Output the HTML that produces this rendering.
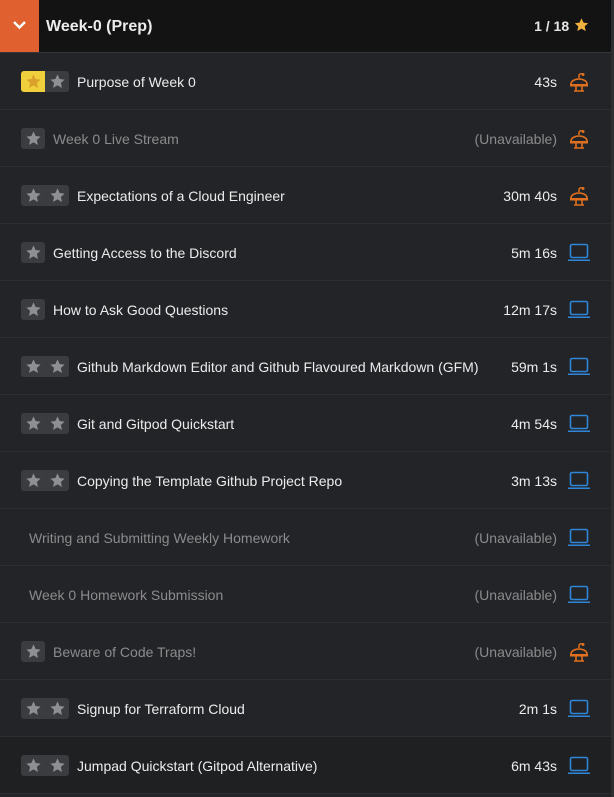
<!DOCTYPE html><html><head><style>
body{margin:0;width:614px;height:797px;background:#1b1b1d;font-family:"Liberation Sans",sans-serif;overflow:hidden}
.wrap{position:absolute;left:0;top:0;width:611px;height:797px;border-right:3px solid #2e2f31;background:#232427}
.hdr{height:52px;background:#131313;border-bottom:1px solid #35363a;position:relative}
.hdr .ob{position:absolute;left:0;top:0;width:39px;height:52px;background:#e0602f}
.hdr .t{position:absolute;left:46px;top:18px;color:#ececec;font-size:16px;font-weight:bold}
.hdr .c{position:absolute;right:21px;top:17px;color:#e6e6e6;font-size:14px;font-weight:bold}
.row{height:56px;border-bottom:1px solid #2d2e31;position:relative;display:flex;align-items:center;font-size:14px;color:#ececec;padding-top:1px;box-sizing:border-box;height:57px}
.row.u{color:#8b8b8d}
.row.last{background:#1f2022}
.stars{margin-left:21px;height:21px;border-radius:3px;background:#3b3c3f;display:flex;margin-right:8px}
.stars span{width:24px;height:21px;display:flex;align-items:center;justify-content:center}
.stars span.y{background:#f0cf3c;border-radius:3px 0 0 3px}
.nos{margin-left:29px}
.r{position:absolute;right:54px;top:21px}
.ic{position:absolute;right:20px;top:19px}
</style></head><body><div class="wrap">
<div class="hdr"><div class="ob"><svg width="39" height="52"><path d="M14 22l5.5 5.5L25 22" stroke="#fff" stroke-width="2.5" fill="none"/></svg></div><div class="t">Week-0 (Prep)</div><div class="c">1 / 18 <svg width="17" height="16" viewBox="0 0 24 24" style="vertical-align:-2px"><path d="M12 2l3 6.5 7 .8-5.2 4.8 1.5 7L12 17.5 5.7 21l1.5-7L2 9.3l7-.8z" fill="#f0b23c"/></svg></div></div>
<div id="rows"></div>
</div>
<script>
const S=(c)=>`<svg width="17" height="17" viewBox="0 0 24 24"><path d="M12 2l3 6.5 7 .8-5.2 4.8 1.5 7L12 17.5 5.7 21l1.5-7L2 9.3l7-.8z" fill="${c}"/></svg>`;
const L='<svg width="24" height="20" viewBox="0 0 24 20"><rect x="3.5" y="1.5" width="17" height="13" rx="1.5" fill="none" stroke="#2f86d8" stroke-width="1.6"/><path d="M1 16.5h22v1.5H1z" fill="#2f86d8"/></svg>';
const D='<svg width="24" height="22" viewBox="0 0 24 22"><path d="M12 6V3.5a2 2 0 0 1 3-1.5" stroke="#e0701f" stroke-width="1.5" fill="none"/><circle cx="16" cy="2.5" r="1.5" fill="#e0701f"/><path d="M4 12a8 5 0 0 1 16 0" fill="none" stroke="#e0701f" stroke-width="1.6"/><rect x="3" y="12" width="18" height="2.5" fill="#e0701f"/><path d="M9 14.5v4M15 14.5v4M7 19h10" stroke="#e0701f" stroke-width="1.6"/></svg>';
const rows=[
[2,'Purpose of Week 0','43s',D,0,1],
[1,'Week 0 Live Stream','(Unavailable)',D,1],
[2,'Expectations of a Cloud Engineer','30m 40s',D],
[1,'Getting Access to the Discord','5m 16s',L],
[1,'How to Ask Good Questions','12m 17s',L],
[2,'Github Markdown Editor and Github Flavoured Markdown (GFM)','59m 1s',L],
[2,'Git and Gitpod Quickstart','4m 54s',L],
[2,'Copying the Template Github Project Repo','3m 13s',L],
[0,'Writing and Submitting Weekly Homework','(Unavailable)',L,1],
[0,'Week 0 Homework Submission','(Unavailable)',L,1],
[1,'Beware of Code Traps!','(Unavailable)',D,1],
[2,'Signup for Terraform Cloud','2m 1s',L],
[2,'Jumpad Quickstart (Gitpod Alternative)','6m 43s',L]];
let h='';rows.forEach((r,i)=>{
let st='';
if(r[0]){st='<div class="stars">';for(let k=0;k<r[0];k++){st+=(r[5]&&k==0)?`<span class="y">${S('#d9a12a')}</span>`:`<span>${S('#8e8f92')}</span>`;}st+='</div>';}
else st='<div class="nos"></div>';
h+=`<div class="row${r[4]?' u':''}${i==12?' last':''}">${st}<span>${r[1]}</span><span class="r">${r[2]}</span><span class="ic">${r[3]}</span></div>`;});
document.getElementById('rows').innerHTML=h;
</script></body></html>
